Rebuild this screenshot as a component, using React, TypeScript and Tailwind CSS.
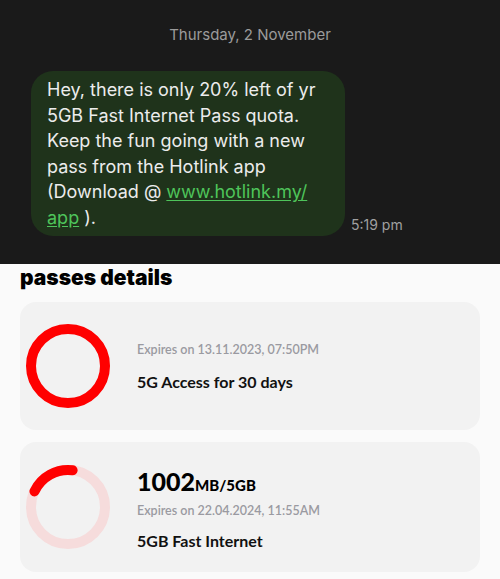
import React from 'react';

const Ring = ({ percent }: { percent: number }): JSX.Element => {
  const r = 37;
  const c = 2 * Math.PI * r;
  const full = percent >= 100;
  return (
    <svg width="86" height="86" viewBox="0 0 86 86" className="shrink-0">
      <circle
        cx="43"
        cy="43"
        r={r}
        fill="none"
        stroke={full ? '#ff0000' : '#f6dcdc'}
        strokeWidth="10"
      />
      {!full && (
        <circle
          cx="43"
          cy="43"
          r={r}
          fill="none"
          stroke="#ff0000"
          strokeWidth="10"
          strokeLinecap="round"
          strokeDasharray={`${(c * percent) / 100} ${c}`}
          transform="rotate(-155 43 43)"
        />
      )}
    </svg>
  );
};

const App = (): JSX.Element => {
  return (
    <div
      className="w-[500px] h-[579px] overflow-hidden bg-[#fafafa]"
      style={{ fontFamily: 'Inter, Roboto, sans-serif' }}
    >
      {/* message thread */}
      <div className="bg-[#1a1a1a] h-[264px] pt-[24px]">
        <p className="text-center text-[15px] leading-[22px] text-[#9b9b9b]">
          Thursday, 2 November
        </p>
        <div className="flex items-end mt-[25px] pl-[31px]">
          <div className="w-[314px] bg-[#1f331b] rounded-[22px] pl-[16px] pr-[10px] pt-[6px] pb-[6px] text-[18px] leading-[25.5px] text-[#ececec]">
            Hey, there is only 20% left of yr 5GB Fast Internet Pass quota.
            Keep the fun going with a new pass from the Hotlink app (Download @{' '}
            <a className="text-[#4ec45a] underline underline-offset-2">
              www.hotlink.my/ app
            </a>{' '}
            ).
          </div>
          <span className="ml-[6px] mb-[1px] text-[14px] leading-[20px] text-[#a0a0a0]">
            5:19 pm
          </span>
        </div>
      </div>

      {/* passes */}
      <div className="px-[20px]" style={{ fontFamily: 'Lato, Inter, sans-serif' }}>
        <h2
          className="font-black text-[21px] leading-[28px] text-black"
          style={{ fontFamily: 'Inter, sans-serif' }}
        >
          passes details
        </h2>
        <div className="mt-[10px] flex flex-col gap-[12px]">
          <div className="h-[128px] rounded-[16px] bg-[#f2f2f2] flex items-center pl-[5px]">
            <Ring percent={100} />
            <div className="ml-[26px] flex flex-col">
              <span className="text-[12.5px] leading-[18px] font-semibold text-[#9a9aa1]">
                Expires on 13.11.2023, 07:50PM
              </span>
              <span className="mt-[14px] text-[16px] leading-[18px] font-bold text-[#111]">
                5G Access for 30 days
              </span>
            </div>
          </div>
          <div className="h-[130px] rounded-[16px] bg-[#f2f2f2] flex items-center pl-[5px]">
            <Ring percent={20} />
            <div className="ml-[26px] flex flex-col">
              <span className="font-black text-black leading-[30px] mt-[1px]">
                <span className="text-[25px]">1002</span>
                <span className="text-[15px]">MB/5GB</span>
              </span>
              <span className="mt-[2px] text-[12.5px] leading-[18px] font-semibold text-[#9a9aa1]">
                Expires on 22.04.2024, 11:55AM
              </span>
              <span className="mt-[12px] text-[16px] leading-[18px] font-bold text-[#111]">
                5GB Fast Internet
              </span>
            </div>
          </div>
        </div>
      </div>
    </div>
  );
};

export default App;
